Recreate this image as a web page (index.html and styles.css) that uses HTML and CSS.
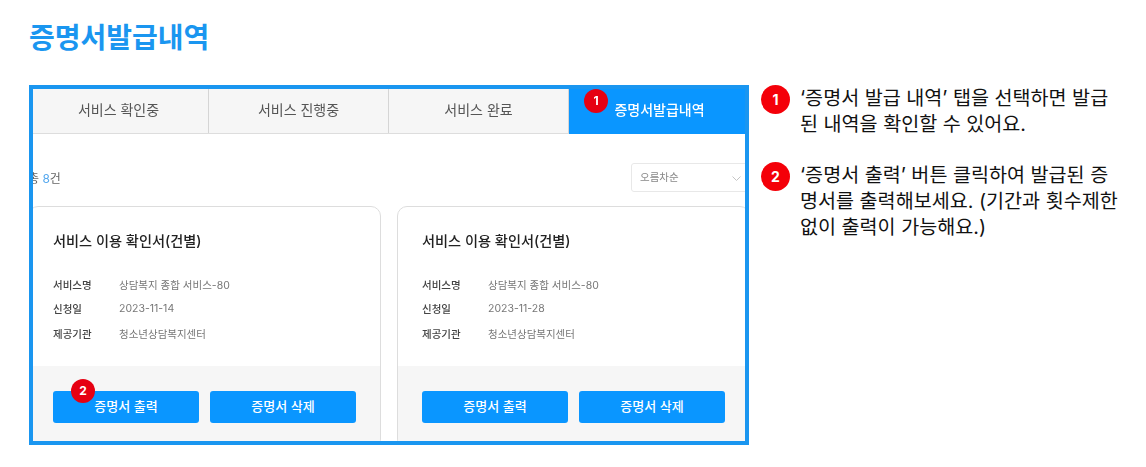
FILE: index.html
```html
<!DOCTYPE html>
<html lang="ko">
<head>
    <meta charset="UTF-8">
    <meta name="viewport" content="width=device-width, initial-scale=1.0">
    <title>증명서발급내역</title>
    <link rel="stylesheet" href="styles.css">
</head>
<body>
    <h1>증명서발급내역</h1>
    <div class="guide">
        <div class="frame">
            <div class="shot">
                <div class="tabs">
                    <div class="tab">서비스 확인중</div>
                    <div class="tab">서비스 진행중</div>
                    <div class="tab">서비스 완료</div>
                    <div class="tab tab-on">증명서발급내역<span class="badge badge-tab">1</span></div>
                </div>
                <div class="list-head">
                    <div class="total">총 <b>8</b>건</div>
                    <div class="sort">
                        오름차순
                        <svg class="chevron" width="9" height="5" viewBox="0 0 9 5"><path d="M.5.5l4 4 4-4" fill="none" stroke="#c4c4c4" stroke-width="1"/></svg>
                    </div>
                </div>
                <div class="cards">
                    <div class="card">
                        <div class="card-body">
                            <h2>서비스 이용 확인서(건별)</h2>
                            <dl>
                                <div class="row"><dt>서비스명</dt><dd>상담복지 종합 서비스-80</dd></div>
                                <div class="row"><dt>신청일</dt><dd>2023-11-14</dd></div>
                                <div class="row"><dt>제공기관</dt><dd>청소년상담복지센터</dd></div>
                            </dl>
                        </div>
                        <div class="card-foot">
                            <div class="btn">증명서 출력<span class="badge badge-btn">2</span></div>
                            <div class="btn">증명서 삭제</div>
                        </div>
                    </div>
                    <div class="card">
                        <div class="card-body">
                            <h2>서비스 이용 확인서(건별)</h2>
                            <dl>
                                <div class="row"><dt>서비스명</dt><dd>상담복지 종합 서비스-80</dd></div>
                                <div class="row"><dt>신청일</dt><dd>2023-11-28</dd></div>
                                <div class="row"><dt>제공기관</dt><dd>청소년상담복지센터</dd></div>
                            </dl>
                        </div>
                        <div class="card-foot">
                            <div class="btn">증명서 출력</div>
                            <div class="btn">증명서 삭제</div>
                        </div>
                    </div>
                </div>
            </div>
        </div>
        <div class="notes">
            <div class="note">
                <span class="num">1</span>
                <p>‘증명서 발급 내역’ 탭을 선택하면 발급 된 내역을 확인할 수 있어요.</p>
            </div>
            <div class="note">
                <span class="num">2</span>
                <p>‘증명서 출력’ 버튼 클릭하여 발급된 증명서를 출력해보세요. (기간과 횟수제한 없이 출력이 가능해요.)</p>
            </div>
        </div>
    </div>
</body>
</html>
```

FILE: styles.css
```css
body {
    font-family: "Inter", "Noto Sans CJK KR", "Noto Sans", sans-serif;
    margin: 0;
    padding: 0 0 0 29px;
    background-color: white;
    overflow: hidden;
}

h1 {
    margin: 0;
    padding-top: 18px;
    height: 85px;
    box-sizing: border-box;
    font-size: 28px;
    line-height: 40px;
    font-weight: 700;
    color: #1a96f0;
}

.guide {
    display: flex;
}

/* 캡처 이미지 영역 */
.frame {
    flex: none;
    width: 720px;
    height: 360px;
    box-sizing: border-box;
    border: 4px solid #1a96f0;
    overflow: hidden;
}

.shot {
    width: 722px;
    margin-left: -5px;
    filter: blur(0.35px);
}

.tabs {
    display: flex;
    height: 44px;
    padding-left: 1px;
    background-color: #f6f6f6;
    border-bottom: 1px solid #dddddd;
}

.tab {
    position: relative;
    flex: 0 0 180px;
    box-sizing: border-box;
    border-right: 1px solid #d5d5d5;
    text-align: center;
    font-size: 14px;
    line-height: 41px;
    color: #555555;
}

.tab-on {
    flex: 1;
    border-right: none;
    margin-bottom: -1px;
    background-color: #0a96ff;
    color: white;
    font-weight: 500;
}

.badge {
    position: absolute;
    width: 24px;
    height: 24px;
    border-radius: 50%;
    background-color: #e60012;
    color: white;
    font-size: 12px;
    line-height: 24px;
    font-weight: 700;
    text-align: center;
}

.badge-tab {
    left: 15px;
    top: 0;
}

.badge-btn {
    left: 18px;
    top: -12px;
}

.list-head {
    display: flex;
    justify-content: space-between;
    align-items: center;
    height: 29px;
    margin-top: 29px;
}

.total {
    font-size: 12px;
    color: #666666;
}

.total b {
    font-weight: 400;
    color: #55a8ee;
}

.sort {
    position: relative;
    width: 119px;
    height: 29px;
    box-sizing: border-box;
    padding-left: 8px;
    border: 1px solid #e8e8e8;
    border-radius: 3px;
    font-size: 10.5px;
    line-height: 27px;
    color: #888888;
}

.chevron {
    position: absolute;
    right: 8px;
    top: 12px;
}

.cards {
    display: flex;
    gap: 16px;
    margin-top: 14px;
}

.card {
    flex: 0 0 353px;
    box-sizing: border-box;
    border: 1px solid #dddddd;
    border-radius: 10px;
    overflow: hidden;
}

.card-body {
    height: 159px;
    box-sizing: border-box;
    padding: 22px 24px 0;
}

h2 {
    margin: 0 0 19px;
    font-size: 14.2px;
    line-height: 24px;
    font-weight: 500;
    color: #222222;
}

dl {
    margin: 0;
}

.row {
    display: flex;
    height: 24.5px;
    align-items: center;
    font-size: 10.5px;
}

dt {
    flex: 0 0 66px;
    font-weight: 500;
    color: #444444;
}

dd {
    margin: 0;
    color: #777777;
}

.card-foot {
    display: flex;
    gap: 11px;
    padding: 25px 24px;
    background-color: #f6f6f6;
}

.btn {
    position: relative;
    flex: 1;
    height: 32px;
    border-radius: 3px;
    background-color: #0a96ff;
    color: white;
    font-size: 13px;
    font-weight: 500;
    line-height: 31px;
    text-align: center;
}

/* 오른쪽 설명 */
.notes {
    margin-left: 12px;
    width: 360px;
}

.note {
    display: flex;
    gap: 10px;
    margin-bottom: 25px;
}

.num {
    flex: none;
    width: 29px;
    height: 29px;
    border-radius: 50%;
    background-color: #f40009;
    color: white;
    font-size: 14px;
    font-weight: 700;
    line-height: 29px;
    text-align: center;
}

.note p {
    margin: 0;
    width: 318px;
    font-size: 19.6px;
    line-height: 26px;
    color: #111111;
    word-break: break-all;
}
```
